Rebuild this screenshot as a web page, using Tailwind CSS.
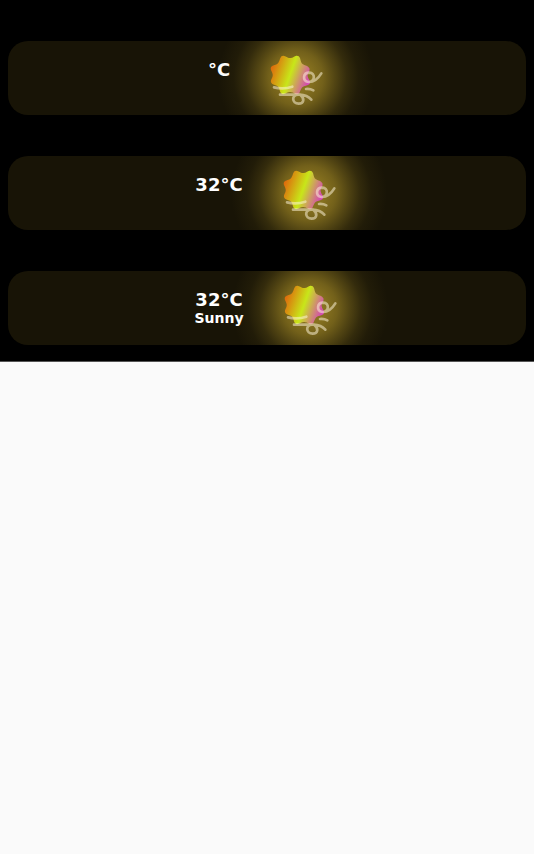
<!DOCTYPE html>
<html lang="en">
<head>
<meta charset="utf-8">
<meta name="viewport" content="width=device-width, initial-scale=1">
<title>Weather</title>
<script src="https://cdn.jsdelivr.net/npm/@tailwindcss/browser@4"></script>
</head>
<body class="min-h-screen bg-[#fafafa] font-['DejaVu_Sans',sans-serif] font-bold text-white">
<svg class="absolute size-0" aria-hidden="true">
  <defs>
    <linearGradient id="sun" gradientUnits="userSpaceOnUse" x1="4" y1="52" x2="118" y2="92">
      <stop offset="0" stop-color="#de6a0c"/>
      <stop offset=".5" stop-color="#c8e619"/>
      <stop offset="1" stop-color="#d445b8"/>
    </linearGradient>
    <radialGradient id="glow">
      <stop offset="0" stop-color="#8c7620"/>
      <stop offset=".2" stop-color="#8c7620" stop-opacity=".95"/>
      <stop offset=".35" stop-color="#8c7620" stop-opacity=".78"/>
      <stop offset=".5" stop-color="#8c7620" stop-opacity=".5"/>
      <stop offset=".65" stop-color="#8c7620" stop-opacity=".24"/>
      <stop offset=".8" stop-color="#8c7620" stop-opacity=".08"/>
      <stop offset="1" stop-color="#8c7620" stop-opacity="0"/>
    </radialGradient>
    <symbol id="weather" viewBox="0 0 168 168">
      <path fill="url(#sun)" d="M31 24Q34 16 43 18C53 22 56 25 62 24C69 23 73 19 79 17Q87 16 90 24C93 35 94 40 99 43C104 46 110 47 115 51Q121 55 118 63C114 70 112 73 113 79C114 85 118 90 120 95Q121 102 114 105C104 108 98 109 95 114C92 119 91 122 88 129Q83 135 76 132C70 128 65 125 59 126C53 127 49 130 42 132Q34 134 31 127C28 116 27 111 22 108C17 105 12 104 6 101Q1 97 3 91C7 82 9 79 8 73C7 67 4 63 2 57Q1 50 8 47C17 44 22 43 25 38C28 33 29 30 31 24Z"/>
      <g fill="none" stroke="#fff6dc" stroke-opacity=".52" stroke-width="8" stroke-linecap="round" stroke-linejoin="round">
        <path d="M12 112Q40 119 67 110"/>
        <path d="M30 134H88C106 135 117 141 124 149M90 134C106 146 101 161 86 161C65 161 64 134 84 134"/>
        <path d="M108 117Q121 116 130 121"/>
        <path d="M154 70C143 88 129 97 115 96C96 92 99 68 118 68C137 69 136 95 115 96"/>
      </g>
    </symbol>
  </defs>
</svg>
<main class="flex flex-col gap-[41px] border-b border-[#555555] bg-black px-2 pt-[41px] pb-4">
  <section class="flex h-[74px] items-center justify-center gap-10 overflow-hidden rounded-[20px] bg-[#181406]">
    <div class="flex flex-col text-center">
      <p class="text-lg leading-5">°C</p>
      <p class="h-4 text-sm leading-4"></p>
    </div>
    <div class="relative size-14">
      <svg class="absolute -inset-13 size-40" viewBox="0 0 160 160" aria-hidden="true"><circle cx="78" cy="80" r="78" fill="url(#glow)"/></svg>
      <svg class="relative size-14" role="img" aria-label="Weather"><use href="#weather"/></svg>
    </div>
  </section>
  <section class="flex h-[74px] items-center justify-center gap-10 overflow-hidden rounded-[20px] bg-[#181406]">
    <div class="flex flex-col text-center">
      <p class="text-lg leading-5">32°C</p>
      <p class="h-4 text-sm leading-4"></p>
    </div>
    <div class="relative size-14">
      <svg class="absolute -inset-13 size-40" viewBox="0 0 160 160" aria-hidden="true"><circle cx="78" cy="80" r="78" fill="url(#glow)"/></svg>
      <svg class="relative size-14" role="img" aria-label="Weather"><use href="#weather"/></svg>
    </div>
  </section>
  <section class="flex h-[74px] items-center justify-center gap-10 overflow-hidden rounded-[20px] bg-[#181406]">
    <div class="flex flex-col text-center">
      <p class="text-lg leading-5">32°C</p>
      <p class="h-4 text-sm leading-4">Sunny</p>
    </div>
    <div class="relative size-14">
      <svg class="absolute -inset-13 size-40" viewBox="0 0 160 160" aria-hidden="true"><circle cx="78" cy="80" r="78" fill="url(#glow)"/></svg>
      <svg class="relative size-14" role="img" aria-label="Sunny"><use href="#weather"/></svg>
    </div>
  </section>
</main>
</body>
</html>
